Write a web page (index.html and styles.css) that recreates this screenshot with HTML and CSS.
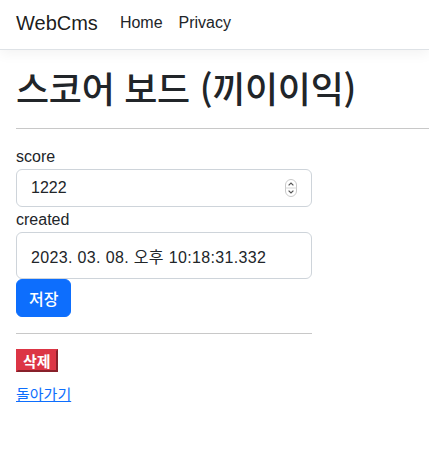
FILE: index.html
```html
<!DOCTYPE html>
<html lang="ko">
<head>
<meta charset="utf-8">
<title>WebCms</title>
<link rel="stylesheet" href="styles.css">
</head>
<body>
<header class="topbar">
  <nav class="navbar">
    <a class="brand" href="#">WebCms</a>
    <ul class="nav">
      <li><a class="nav-link" href="#">Home</a></li>
      <li><a class="nav-link" href="#">Privacy</a></li>
    </ul>
  </nav>
</header>
<main class="page">
  <h1 class="title">스코어 보드 (끼이이익)</h1>
  <hr class="rule rule-top">
  <div class="col">
    <form class="edit-form">
      <div class="field">
        <label class="label" for="score">score</label>
        <div class="input-wrap">
          <input class="control" id="score" type="text" value="1222">
          <svg class="spinner" width="12" height="18" viewBox="0 0 12 18" aria-hidden="true">
            <rect x="0.5" y="0.5" width="11" height="17" rx="5.5" fill="#fff" stroke="#c9c9c9"/>
            <line x1="0.5" y1="9" x2="11.5" y2="9" stroke="#d6d6d6"/>
            <path d="M3.6 6.4 L6 4 L8.4 6.4" fill="none" stroke="#555" stroke-width="1.2"/>
            <path d="M3.6 11.6 L6 14 L8.4 11.6" fill="none" stroke="#555" stroke-width="1.2"/>
          </svg>
        </div>
      </div>
      <div class="field">
        <label class="label" for="created">created</label>
        <input class="control control-tall" id="created" type="text" value="2023. 03. 08. 오후 10:18:31.332">
      </div>
      <button class="btn-primary" type="button">저장</button>
    </form>
    <hr class="rule rule-short">
    <form class="delete-form">
      <button class="btn-danger" type="button">삭제</button>
    </form>
    <a class="back-link" href="#">돌아가기</a>
  </div>
</main>
</body>
</html>
```

FILE: styles.css
```css
* { box-sizing: border-box; }

html, body {
  margin: 0;
  padding: 0;
  background: #fff;
}

body {
  font-family: "Liberation Sans", "Noto Sans CJK KR", Arial, sans-serif;
  font-size: 16px;
  line-height: 1.5;
  color: #212529;
}

.topbar {
  border-bottom: 1px solid #dee2e6;
  box-shadow: 0 4px 12px rgba(0, 0, 0, 0.05);
  margin-bottom: 16px;
}

.navbar {
  display: flex;
  align-items: center;
  height: 49px;
  padding: 0 16px 4px;
}

.brand {
  font-size: 20px;
  color: rgba(0, 0, 0, 0.9);
  text-decoration: none;
  margin-right: 14px;
  line-height: 30px;
}

.nav {
  display: flex;
  list-style: none;
  margin: 0;
  padding: 0;
}

.nav-link {
  display: block;
  padding: 0 8px;
  color: #212529;
  text-decoration: none;
  line-height: 24px;
}

.page {
  padding: 0 0 0 16px;
}

.title {
  margin: 0;
  font-size: 36px;
  font-weight: 500;
  line-height: 1.2;
  letter-spacing: -0.3px;
  font-family: "Noto Sans CJK KR", "Liberation Sans", sans-serif;
}

.rule {
  margin: 16px 0;
  border: 0;
  border-top: 1px solid #c8c8c8;
}

.rule-top {
  margin-top: 19px;
}

.col {
  width: 296px;
}

.field {
  margin: 0;
}

.label {
  display: block;
  line-height: 24px;
}

.input-wrap {
  position: relative;
}

.control {
  display: block;
  width: 100%;
  height: 38px;
  padding: 6px 12px 6px 14px;
  font: inherit;
  color: #212529;
  background: #fff;
  border: 1px solid #ced4da;
  border-radius: 6px;
  margin-bottom: 1px;
}

.control-tall {
  height: 47px;
  padding-left: 14px;
  margin-bottom: 0;
  letter-spacing: 0.35px;
}

.spinner {
  position: absolute;
  right: 15px;
  top: 10px;
}

.btn-primary {
  display: block;
  height: 38px;
  padding: 0 12px;
  font: inherit;
  font-family: "Noto Sans CJK KR", sans-serif;
  font-weight: 500;
  color: #fff;
  background: #0d6efd;
  border: 1px solid #0d6efd;
  border-radius: 6px;
}

.rule-short {
  margin: 16px 0 15px;
}

.delete-form {
  margin: 0;
}

.btn-danger {
  display: block;
  height: 23px;
  padding: 0 5px;
  font-family: "Noto Sans CJK KR", sans-serif;
  font-size: 15px;
  font-weight: 700;
  line-height: 18px;
  color: #fff;
  background: #dc3545;
  border: 2px outset #dc3545;
  border-radius: 0;
}

.back-link {
  display: inline-block;
  margin-top: 11px;
  color: #0d6efd;
  font-family: "Noto Sans CJK KR", sans-serif;
  font-size: 15px;
  line-height: 22px;
  text-decoration: underline;
}
```
